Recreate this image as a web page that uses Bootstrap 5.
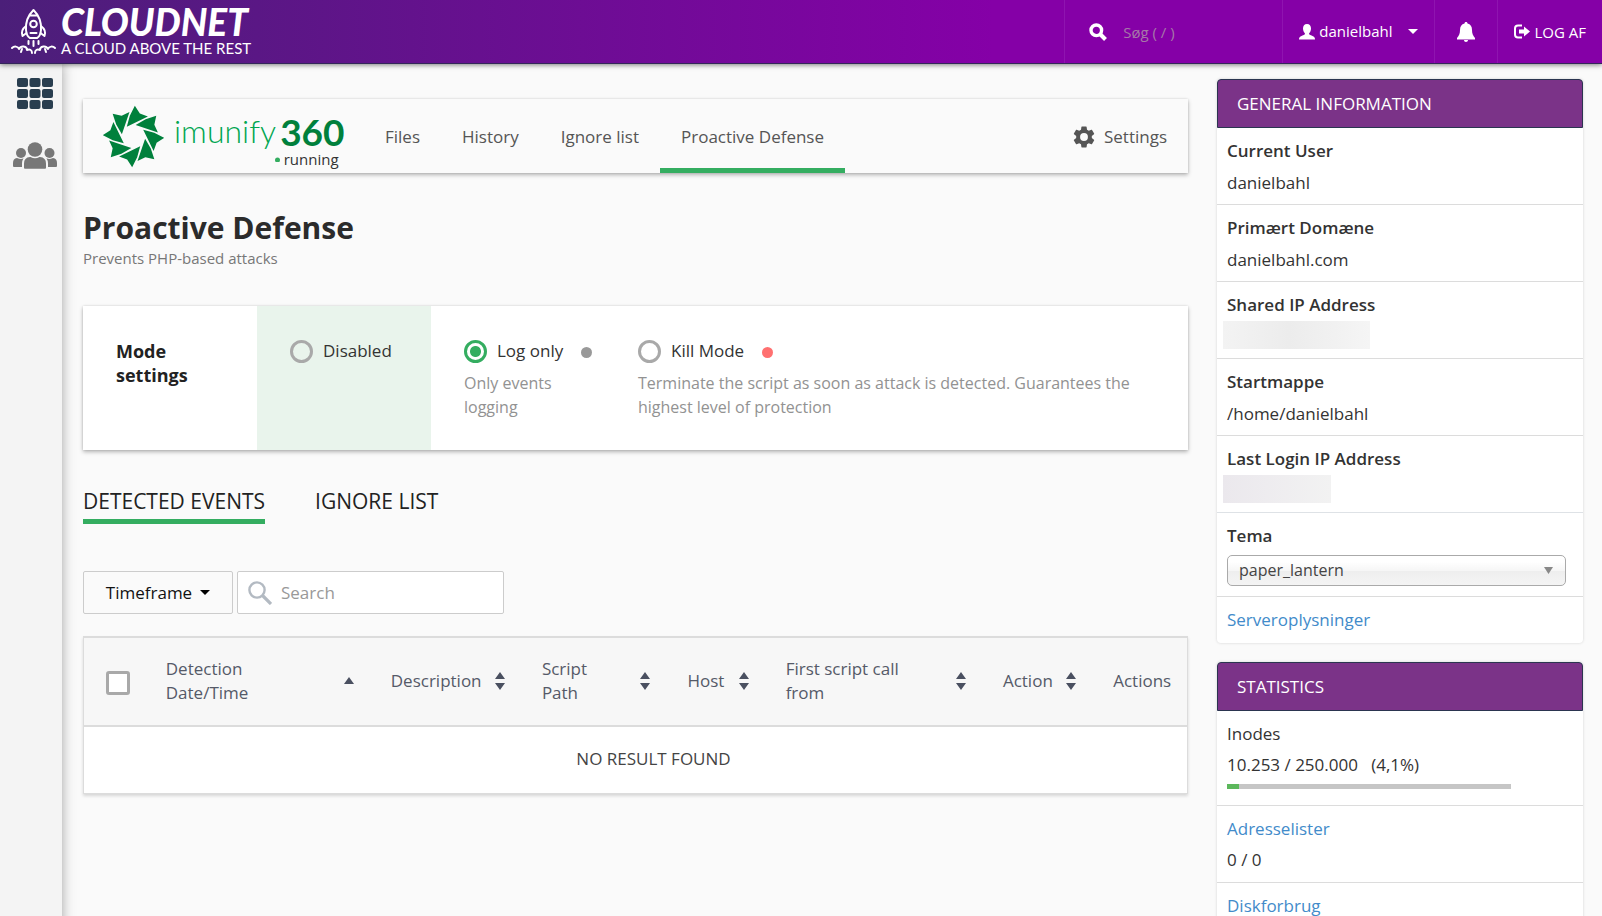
<!DOCTYPE html>
<html lang="da">
<head>
<meta charset="utf-8">
<meta name="viewport" content="width=device-width, initial-scale=1">
<title>Proactive Defense</title>
<link href="https://cdn.jsdelivr.net/npm/bootstrap@5.3.0/dist/css/bootstrap.min.css" rel="stylesheet">
<style>
  :root { --green: #34ad60; --line: #dcdcdc; }
  body { font-family: "Open Sans", sans-serif; font-size: 17px; line-height: 24px; color: #333; background: #fafafa; overflow-x: hidden; }
  ::-webkit-scrollbar { display: none; }
  a { text-decoration: none; }
  svg { flex: none; display: block; }

  .topbar { height: 64px; background: linear-gradient(90deg, #4b1f79 0, #8500a7 62%); border-bottom: 1px solid #33265a; box-shadow: 0 1px 5px rgba(0,0,0,.5); z-index: 3; position: relative; color: #fff; font-size: 15px; }
  .topbar a, .topbar button { color: #fff; font-size: 15px; }
  .topbar .cell { border: 0; border-left: 1px solid #8f14b0; border-radius: 0; }
  .topbar input { background: none; border: 0; outline: 0; color: #fff; width: 135px; padding: 0; }
  .topbar input::placeholder { color: #a679a8; opacity: 1; }
  .alerts { padding: 0 22px; }
  .brand-text { padding: 4px 0 0 1px; }
  .brand-name { font: italic 900 37px/36px Lato, sans-serif; }
  .brand-line { font: 400 15px/16px Lato, sans-serif; }

  .sidebar { width: 62px; background: #f4f4f4; box-shadow: 0 0 12px rgba(0,0,0,.35); padding: 14px 0 0 8px; }
  .content-col { padding: 35px 29px 0 21px; min-width: 0; }
  .raised { box-shadow: 0 2px 4px rgba(0,0,0,.28), 0 0 2px rgba(0,0,0,.12); }

  .product-bar { height: 74px; }
  .product-logo { width: 281px; padding-left: 20px; gap: 10px; }
  .word-a { font: 300 32px/36px Lato, sans-serif; color: #00a651; }
  .word-b { font: 700 37px/38px Lato, sans-serif; color: #00803c; }
  .run-state { font-size: 15px; line-height: 16px; color: #333; margin-right: 6px; }
  .product-tab { color: #555; padding: 2px 21px 0; border-top: 5px solid transparent; border-bottom: 5px solid transparent; }
  .product-tab.active { border-bottom-color: var(--green); }

  h1 { font-size: 30px; line-height: 40px; font-weight: 700; color: #2b2b2b; margin: 35px 0 0; }
  .sub { font-size: 15px; line-height: 20px; color: #777; margin: 0 0 38px; }

  .modes { min-height: 144px; background: #fff; }
  .mode { flex: 0 0 174px; min-width: 0; padding: 33px 10px 23px 33px; }
  .mode-title { font-size: 18px; color: #222; }
  .mode-off { background: #e9f4ec; }
  .mode .form-check-input { width: 23px; height: 23px; margin: 0 10px 0 0; float: none; flex: none; border: 3px solid #a9a9a9; background-color: transparent; box-shadow: none; }
  .mode .form-check-input:checked { border-color: var(--green); background-image: radial-gradient(circle, var(--green) 0 5px, transparent 6px); }
  .mode label { color: #333; }
  .mode p { font-size: 16px; line-height: 24px; color: #929292; margin: 8px 0 0; }
  .spot { width: 11px; height: 11px; border-radius: 50%; margin-left: 18px; margin-top: 2px; }

  .section-tabs { font-size: 21px; line-height: 32px; gap: 50px; margin-top: 35px; }
  .section-tabs a { color: #222; border-bottom: 5px solid transparent; padding-bottom: 2px; }
  .section-tabs .active { border-color: var(--green); }

  .filters { gap: 4px; margin: 47px 0 22px; }
  .filters .btn { width: 150px; height: 43px; font-size: 17px; border: 1px solid #ccc; border-radius: 2px; background: #fafafa; color: #111; padding: 0; }
  .search-box { width: 267px; height: 43px; border: 1px solid #ccc; border-radius: 2px; background: #fff; padding: 0 10px; gap: 9px; }
  .search-box input { border: 0; outline: 0; width: 100%; min-width: 0; padding: 0; }
  .search-box input::placeholder { color: #999; opacity: 1; }

  .events { table-layout: fixed; background: #fff; border: 1px solid var(--line); border-top-width: 2px; box-shadow: 0 2px 3px rgba(0,0,0,.14); margin: 0; width: 100%; border-collapse: separate; border-spacing: 0; }
  .events th { height: 89px; background: #f7f7f7; font-weight: 400; color: #555a68; padding: 0 17px 2px 20px; border-bottom: 2px solid var(--line); vertical-align: middle; }
  .events th:last-child { padding-right: 0; }
  .events td { height: 66px; padding: 0 0 3px 36px; text-align: center; vertical-align: middle; color: #444; }
  .events .form-check-input { display: block; width: 24px; height: 24px; margin: 4px 0 0 2px; border: 3px solid #a9a9a9; border-radius: 3px; background-color: #fff; }

  .info-col { width: 385px; flex: none; padding: 15px 19px 0 0; }
  .panel { background: #fff; border-radius: 4px; box-shadow: 0 0 3px rgba(0,0,0,.16); margin-bottom: 19px; line-height: 28px; }
  .panel h2 { font-size: 17px; line-height: 47px; font-weight: 400; color: #fff; background: #7b3388; border: 1px solid #2b3550; border-radius: 4px 4px 0 0; padding: 0 19px; margin: 0; }
  .entry { padding: 9px 10px 7px; border-bottom: 1px solid var(--line); }
  .entry:last-child { border-bottom: 0; }
  .entry dt, .entry label { font-weight: 600; display: block; margin-bottom: 4px; color: #333; }
  .entry dd { margin: 0; }
  .entry a { color: #428bca; }
  .entry .masked { height: 28px; margin: -2px 0 2px -4px; background: linear-gradient(90deg, #f3f3f3, #ececec 45%, #f5f5f5); }
  .masked-ip { width: 147px; }
  .entry .masked-login { width: 108px; background: linear-gradient(90deg, #ebe8ed, #f2f2f2); }
  .theme-entry { padding-bottom: 10px; }
  .theme-entry label { margin-bottom: 5px; }
  .server-entry { padding-bottom: 9px; }
  .entry .form-select { font-size: 16px; line-height: 20px; height: 31px; width: 339px; max-width: 100%; padding: 4px 30px 5px 11px; color: #444; border: 1px solid #aaa; border-radius: 5px; background: url("data:image/svg+xml,%3Csvg xmlns='http://www.w3.org/2000/svg' viewBox='0 0 9 7'%3E%3Cpath fill='%23888' d='M0 0h9L4.500 7z'/%3E%3C/svg%3E") no-repeat right 12px center / 9px 7px, linear-gradient(#fff 20%, #f6f6f6 50%, #eee 52%, #f4f4f4); }
  .entry .progress { width: 284px; height: 5px; border-radius: 0; background: #c6c6c6; margin: 6px 0 9px; }
  .entry .progress-bar { background: #5cb85c; }
  .usage { line-height: 26px; }
  .stat-entry { padding-bottom: 9px; }
</style>
</head>
<body>
<header class="topbar d-flex align-items-stretch">
  <a href="#" class="d-flex align-items-start me-auto ps-2">
    <svg width="52" height="63" viewBox="0 0 52 63" fill="none" stroke="#fff" stroke-width="2" stroke-linecap="round" stroke-linejoin="round" aria-hidden="true">
      <path d="M25.500 10c-6 6-8 13-7.500 20 .4 4 2 7 4 8h7c2-1 3.600-4 4-8 .5-7-1.500-14-7.500-20zM22 15.500h7"/>
      <circle cx="25.500" cy="24" r="3.300"/>
      <path d="M18 26c-4 3-5 6-3.500 10l4-3M33 26c4 3 5 6 3.500 10l-4-3M22.500 33h6M20.500 41v3M25.500 41v5M30.500 41v3"/>
      <path d="M4 48c2-2 6-2 7 1 2-4 8-3 8 1 3-1 5 0 5 3M47 48c-2-2-6-2-7 1-2-4-8-3-8 1-3-1-5 0-5 3M13 52l1-3M38 52l-1-3"/>
    </svg>
    <span class="brand-text d-block">
      <span class="brand-name d-block">CLOUDNET</span>
      <span class="brand-line d-block">A CLOUD ABOVE THE REST</span>
    </span>
  </a>
  <form class="cell d-flex align-items-center px-4" role="search">
    <svg width="18" height="18" viewBox="0 0 18 18" fill="none" stroke="#fff" stroke-width="3.400" aria-hidden="true"><circle cx="7.300" cy="7.300" r="5.300"/><path d="M11 11l5.500 5.500" stroke-width="4"/></svg>
    <input class="ms-3" type="search" aria-label="Søg" placeholder="Søg ( / )">
  </form>
  <button type="button" class="cell btn d-flex align-items-center p-0 ps-3">
    <svg width="16" height="16" viewBox="0 0 16 16" fill="#fff" aria-hidden="true"><path d="M8 0c2.600 0 4 1.800 4 4.500 0 2-1 4-2 5 0 1.600 2 1.700 4 2.700 1.400.7 2 1.500 2 3.300H0c0-1.800.6-2.600 2-3.300 2-1 4-1.100 4-2.700-1-1-2-3-2-5C4 1.800 5.400 0 8 0z"/></svg>
    <span class="ms-1">danielbahl</span>
    <svg class="ms-3 me-3" width="10" height="5" viewBox="0 0 10 5" fill="#fff" aria-hidden="true"><path d="M0 0h10L5 5z"/></svg>
  </button>
  <button type="button" class="cell alerts btn d-flex align-items-center" aria-label="Beskeder">
    <svg width="18" height="20" viewBox="0 0 18 20" fill="#fff" aria-hidden="true"><path d="M9 0c1 0 1.500.6 1.500 1.500C13.500 2.300 15 4.500 15 8c0 4 1 5.500 3 8v1.500H0V16c2-2.500 3-4 3-8 0-3.500 1.500-5.700 4.500-6.500C7.500.6 8 0 9 0zM7 18h4c0 1.300-.8 2-2 2s-2-.7-2-2z"/></svg>
  </button>
  <a href="#" class="cell d-flex align-items-center px-3">
    <svg width="16" height="15" viewBox="0 0 16 15" aria-hidden="true"><path d="M8 1.500H4Q1 1.500 1 4.500v6q0 3 3 3h4" fill="none" stroke="#fff" stroke-width="2"/><path fill="#fff" d="M5 5.500h5V2.500L16 7.500l-6 5v-3H5z"/></svg>
    <span class="ms-1">LOG AF</span>
  </a>
</header>

<div class="d-flex align-items-stretch min-vh-100">
  <nav class="sidebar flex-shrink-0" aria-label="Genveje">
    <a href="#" class="d-block" aria-label="Oversigt">
      <svg class="mx-auto" width="36" height="32" viewBox="1 0 36 32" fill="#293e4f"><g id="r"><rect x="1" width="11" height="9" rx="2"/><rect x="13.500" width="11" height="9" rx="2"/><rect x="26" width="11" height="9" rx="2"/></g><use href="#r" y="11"/><use href="#r" y="22"/></svg>
    </a>
    <a href="#" class="d-block mt-4 pt-2" aria-label="Brugere">
      <svg class="mx-auto" width="44" height="27" viewBox="0 0 44 27" fill="#777"><circle cx="22" cy="7.500" r="7.300"/><path d="M11 26v-4.500q0-6 6-6.500h.5q4.500 2.500 9 0h.5q6 .5 6 6.500V26q0 .7-1 .7H12q-1 0-1-.7z"/><circle cx="8" cy="11" r="5"/><circle cx="36.500" cy="11" r="5"/><path d="M0 24v-3q0-4.500 4-5 4 2 6.500.3-1.500 2.500-1.500 5V25H1q-1 0-1-1zM44 24v-3q0-4.500-4-5-4 2-6.500.3 1.500 2.500 1.500 5V25h8q1 0 1-1z"/></svg>
    </a>
  </nav>

  <main class="content-col flex-grow-1">
    <nav class="product-bar raised d-flex align-items-stretch">
      <a href="#" class="product-logo d-flex align-items-center">
        <svg width="61" height="63" viewBox="-91 -94 182 188" fill="#00803c" aria-hidden="true">
          <path id="b" d="M4-92L19-69 43-60-20-29-11-62z"/>
          <use href="#b" transform="rotate(45)"/><use href="#b" transform="rotate(90)"/><use href="#b" transform="rotate(135)"/><use href="#b" transform="rotate(180)"/><use href="#b" transform="rotate(225)"/><use href="#b" transform="rotate(270)"/><use href="#b" transform="rotate(315)"/>
        </svg>
        <span class="d-block pt-2">
          <span class="d-flex gap-1"><span class="word-a">imunify</span><span class="word-b">360</span></span>
          <span class="run-state d-flex align-items-center justify-content-end gap-1"><svg width="5" height="6"><circle cx="2.500" cy="4" r="2.500" fill="#34ad60"/></svg>running</span>
        </span>
      </a>
      <a href="#" class="product-tab d-flex align-items-center">Files</a>
      <a href="#" class="product-tab d-flex align-items-center">History</a>
      <a href="#" class="product-tab d-flex align-items-center">Ignore list</a>
      <a href="#" class="product-tab active d-flex align-items-center" aria-current="page">Proactive Defense</a>
      <a href="#" class="product-tab d-flex align-items-center gap-2 ms-auto">
        <svg width="24" height="24" viewBox="1 1 22 22" fill="#555" aria-hidden="true"><path d="M19.140 12.940c.04-.3.060-.61.060-.94 0-.32-.02-.64-.07-.94l2.030-1.580c.18-.14.23-.41.12-.61l-1.920-3.320c-.12-.22-.37-.29-.59-.22l-2.390.96c-.5-.38-1.030-.7-1.620-.94l-.36-2.540c-.04-.24-.24-.41-.48-.41h-3.840c-.24 0-.43.17-.47.41L9.250 5.350c-.59.24-1.130.57-1.620.94l-2.390-.96c-.22-.08-.47 0-.59.22L2.740 8.870c-.12.21-.08.47.12.61l2.030 1.580c-.05.3-.09.63-.09.94s.02.64.07.94l-2.030 1.580c-.18.14-.23.41-.12.61l1.920 3.320c.12.22.37.29.59.22l2.390-.96c.5.38 1.030.7 1.620.94l.36 2.540c.05.24.24.41.48.41h3.840c.24 0 .44-.17.47-.41l.36-2.540c.59-.24 1.130-.56 1.620-.94l2.390.96c.22.08.47 0 .59-.22l1.920-3.320c.12-.22.07-.47-.12-.61zM12 15.600a3.600 3.600 0 1 1 0-7.200 3.600 3.600 0 0 1 0 7.200z"/></svg>
        Settings
      </a>
    </nav>

    <h1>Proactive Defense</h1>
    <p class="sub">Prevents PHP-based attacks</p>

    <section class="modes raised d-flex" aria-label="Mode settings">
      <div class="mode mode-title fw-bold">Mode<br>settings</div>
      <div class="mode mode-off">
        <div class="d-flex align-items-center"><input class="form-check-input" type="radio" name="mode" id="m1"><label for="m1">Disabled</label></div>
      </div>
      <div class="mode">
        <div class="d-flex align-items-center text-nowrap"><input class="form-check-input" type="radio" name="mode" id="m2" checked><label for="m2">Log only</label><span class="spot flex-shrink-0" style="background:#999"></span></div>
        <p>Only events<br>logging</p>
      </div>
      <div class="mode flex-fill">
        <div class="d-flex align-items-center"><input class="form-check-input" type="radio" name="mode" id="m3"><label for="m3">Kill Mode</label><span class="spot" style="background:#ff7070"></span></div>
        <p>Terminate the script as soon as attack is detected. Guarantees the highest level of protection</p>
      </div>
    </section>

    <nav class="section-tabs d-flex">
      <a href="#" class="active" aria-current="page">DETECTED EVENTS</a>
      <a href="#">IGNORE LIST</a>
    </nav>

    <div class="filters d-flex">
      <button type="button" class="btn d-flex align-items-center justify-content-center gap-2">Timeframe
        <svg width="10" height="5" viewBox="0 0 10 5" aria-hidden="true"><path d="M0 0h10L5 5z"/></svg></button>
      <div class="search-box d-flex align-items-center">
        <svg width="24" height="24" viewBox="0 0 24 24" fill="none" stroke="#b3bac2" stroke-width="2.400" aria-hidden="true"><circle cx="9" cy="9" r="7.600"/><path d="M14.500 14.500l8.500 8.500" stroke-width="3.200"/></svg>
        <input type="search" aria-label="Search" placeholder="Search">
      </div>
    </div>

    <svg width="0" height="0" class="position-absolute" aria-hidden="true"><symbol id="sort" viewBox="0 0 10 18"><path fill="#4a5060" d="M0 7h10L5 0zM0 11h10l-5 7z"/></symbol></svg>
    <table class="events">
      <colgroup><col style="width:5.6%"><col style="width:20.4%"><col style="width:13.7%"><col style="width:13.2%"><col style="width:8.9%"><col style="width:19.700%"><col style="width:10%"><col style="width:8.5%"></colgroup>
      <thead><tr>
        <th scope="col"><input class="form-check-input" type="checkbox" aria-label="Select all"></th>
        <th scope="col"><div class="d-flex align-items-center justify-content-between"><span>Detection<br>Date/Time</span><svg width="10" height="7" viewBox="0 0 10 7" fill="#4a5060"><path d="M0 7h10L5 0z"/></svg></div></th>
        <th scope="col"><div class="d-flex align-items-center justify-content-between">Description<svg width="10" height="18"><use href="#sort"/></svg></div></th>
        <th scope="col"><div class="d-flex align-items-center justify-content-between"><span>Script<br>Path</span><svg width="10" height="18"><use href="#sort"/></svg></div></th>
        <th scope="col"><div class="d-flex align-items-center justify-content-between">Host<svg width="10" height="18"><use href="#sort"/></svg></div></th>
        <th scope="col"><div class="d-flex align-items-center justify-content-between"><span>First script call<br>from</span><svg width="10" height="18"><use href="#sort"/></svg></div></th>
        <th scope="col"><div class="d-flex align-items-center justify-content-between">Action<svg width="10" height="18"><use href="#sort"/></svg></div></th>
        <th scope="col">Actions</th>
      </tr></thead>
      <tbody><tr><td colspan="8">NO RESULT FOUND</td></tr></tbody>
    </table>
  </main>

  <aside class="info-col">
    <section class="panel">
      <h2>GENERAL INFORMATION</h2>
      <dl class="m-0">
        <div class="entry"><dt>Current User</dt><dd>danielbahl</dd></div>
        <div class="entry"><dt>Primært Domæne</dt><dd>danielbahl.com</dd></div>
        <div class="entry"><dt>Shared IP Address</dt><dd class="masked masked-ip"></dd></div>
        <div class="entry"><dt>Startmappe</dt><dd>/home/danielbahl</dd></div>
        <div class="entry border-bottom"><dt>Last Login IP Address</dt><dd class="masked masked-login"></dd></div>
      </dl>
      <div class="entry theme-entry"><label for="theme">Tema</label><select id="theme" class="form-select"><option>paper_lantern</option></select></div>
      <div class="entry server-entry"><a href="#">Serveroplysninger</a></div>
    </section>
    <section class="panel">
      <h2>STATISTICS</h2>
      <div class="entry">
        <div>Inodes</div>
        <div class="usage pt-1">10.253 / 250.000 &nbsp; (4,1%)</div>
        <div class="progress" role="progressbar" aria-label="Inodes" aria-valuenow="4" aria-valuemin="0" aria-valuemax="100"><div class="progress-bar" style="width:4.1%"></div></div>
      </div>
      <div class="entry stat-entry"><a href="#">Adresselister</a><div class="usage pt-1">0 / 0</div></div>
      <div class="entry stat-entry"><a href="#">Diskforbrug</a></div>
    </section>
  </aside>
</div>
<script src="https://cdn.jsdelivr.net/npm/bootstrap@5.3.0/dist/js/bootstrap.bundle.min.js"></script>
</body>
</html>
